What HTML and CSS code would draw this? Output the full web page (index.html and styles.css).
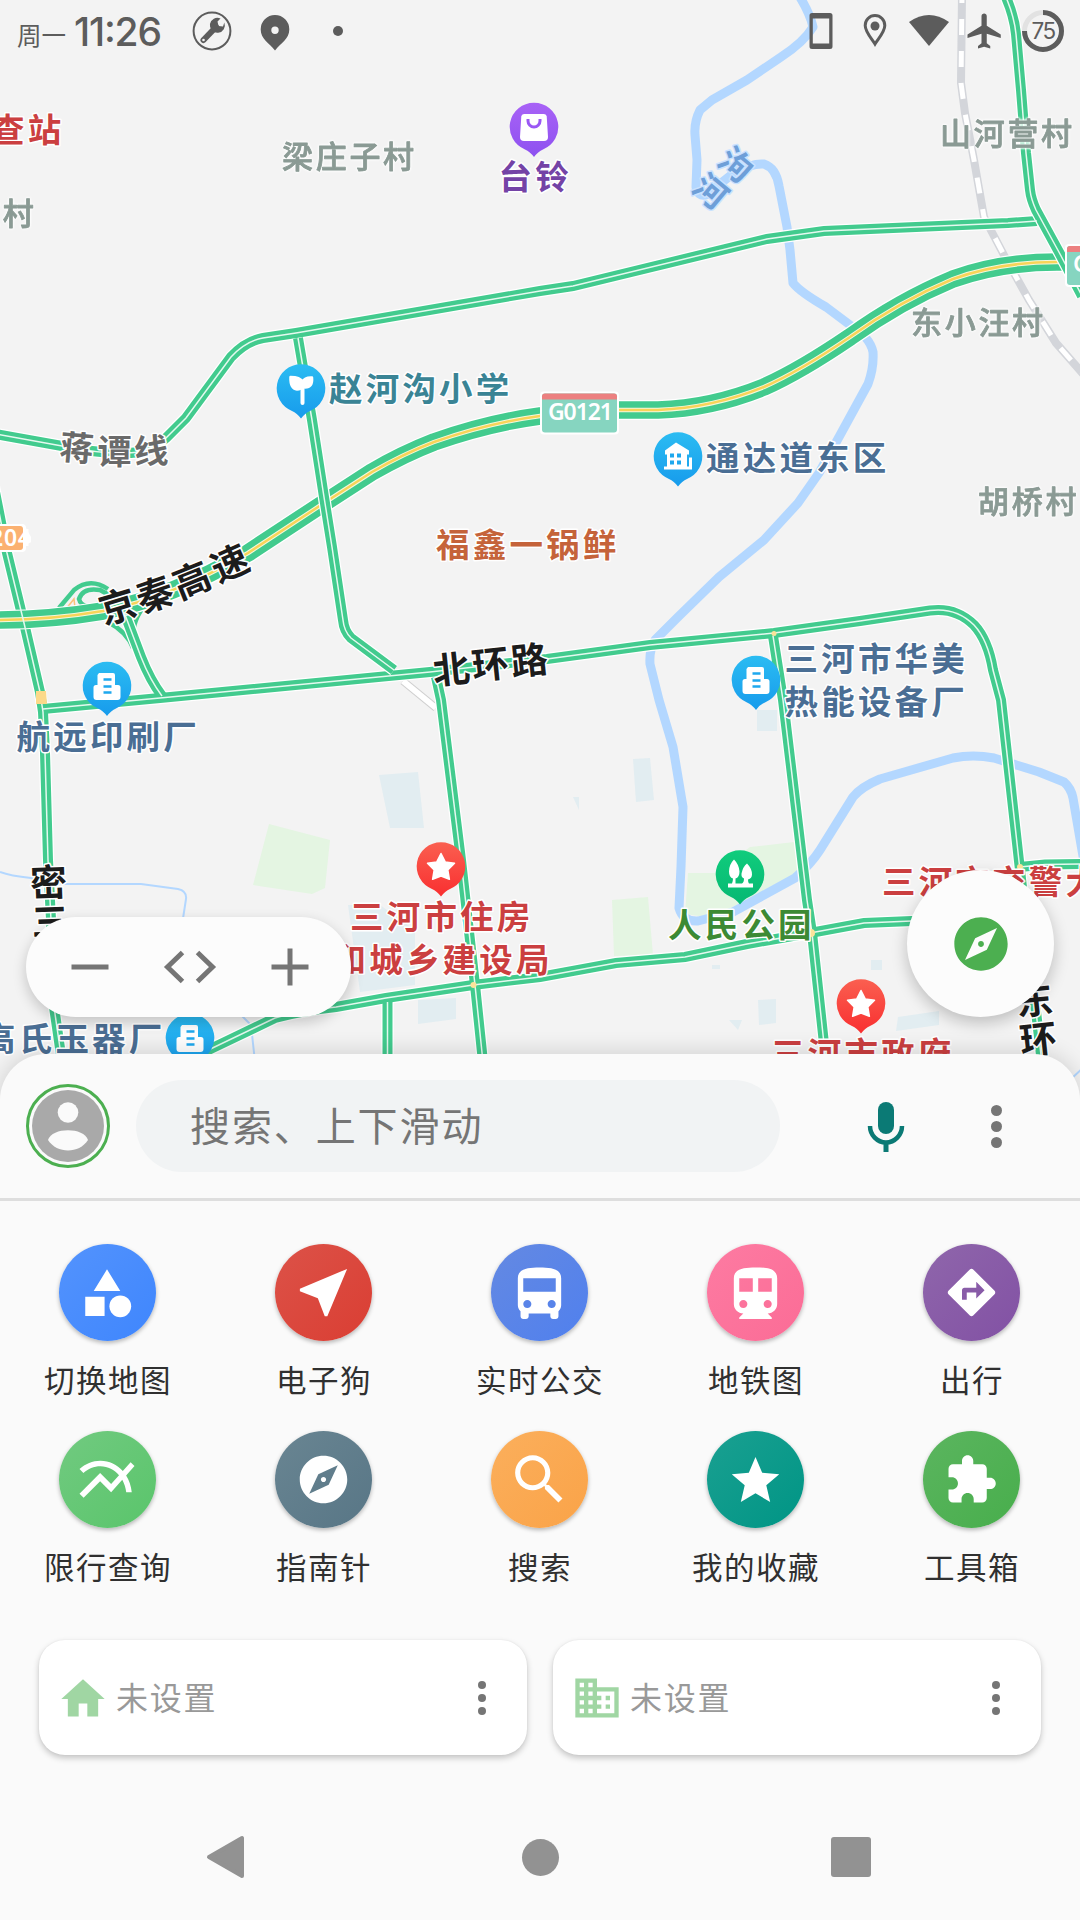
FILE: index.html
```html
<!DOCTYPE html>
<html lang="zh-CN">
<head>
<meta charset="utf-8">
<title>地图</title>
<link rel="stylesheet" href="styles.css">
</head>
<body>
<main class="screen">
  <section class="map-area">
    <svg class="map" viewBox="0 0 1080 1110" width="1080" height="1110">
      <defs>
        <linearGradient id="pin-blue" x1="0" y1="0" x2="0" y2="1"><stop offset="0" stop-color="#2bbcf2"/><stop offset="1" stop-color="#179bec"/></linearGradient>
        <linearGradient id="pin-red" x1="0" y1="0" x2="0" y2="1"><stop offset="0" stop-color="#fa5f50"/><stop offset="1" stop-color="#f92f30"/></linearGradient>
        <linearGradient id="pin-green" x1="0" y1="0" x2="0" y2="1"><stop offset="0" stop-color="#10cc7c"/><stop offset="1" stop-color="#06b873"/></linearGradient>
        <linearGradient id="pin-purple" x1="0" y1="0" x2="0" y2="1"><stop offset="0" stop-color="#a862f6"/><stop offset="1" stop-color="#8d51f0"/></linearGradient>
        <path id="pin" d="M0-24.3a24.2 24.2 0 0 1 9 46.7Q4 24.500 0 30Q-4 24.500-9 22.400A24.200 24.200 0 0 1 0-24.300z"/>
        <g id="factory"><path d="M-8-13h14q2 0 2 2v10h3q2.500 0 2.500 2.500V11q0 3-3 3h-21q-3 0-3-3V1.500Q-13.500-1-11-1h1.500V-11z" fill="#fff"/><path d="M-3.500-6.500h8M-3.500.5h8M-3.500 6.500h8" stroke="#1ea8ee" stroke-width="2.600"/></g>
        <path id="star" d="M0-13l4.200 8.400 9.300 1.400-6.700 6.600 1.600 9.400L0 9.500l-8.400 3.300 1.600-9.400-6.700-6.600 9.300-1.400z" fill="#fff" stroke="#fff" stroke-width="1.500" stroke-linejoin="round"/>
        <path id="r-north" d="M-2 434.500L62 446Q110 456 140 452Q158 446 166 438L186 418L231 357Q246 341 263 338L296 333L540 291L573 286L767 239L824 231L1008 223L1037 221"/>
        <path id="r-east" d="M1005-5Q1014 15 1016 34L1021 90L1026 153L1030 190Q1031 199 1036 210L1060 254L1082 296"/>
        <path id="r-mid" d="M298 338L312 420L324 497L332 547L343 620Q344 631 351 638L394 670"/>
        <path id="r-west" d="M-11 462L-2 507L7 553L24 623L40 692L43 712L45 753L48 860L51 920L53 1000L62 1062"/>
        <path id="r-ring" d="M43 709L160 698L430 672L547 659L650 645L774 633L860 621L930 610.500Q956 607 974 625Q988 640 993 670L1001 700L1020 870L1042 1064"/>
        <path id="r-f" d="M436 677L441 700L461 860L475 985L483 1062"/>
        <path id="r-g" d="M200 1054L275 1018Q305 1010 336 1007L386 998L473 985L540 977L616 963L685 957L747 944L810 933L864 923L912 921L980 919"/>
        <path id="r-h" d="M773 636L783 700L807 900L812 933L826 1062"/>
        <path id="r-i" d="M387.500 1002V1062"/>
        <path id="r-j" d="M1020 867L1045 864.500L1082 864"/>
        <path id="r-ramp" d="M124 612L141 657Q150 680 162 696"/>
        <path id="hwy" d="M-5 620Q50 620 103 611Q170 598 248 553L324 503L372 472Q403 454 434 442Q488 423 540 416L619 410H658Q712 408 764 387Q800 371 850 337Q900 301 953 279Q1000 262 1057 262H1085"/>
      </defs>
      <rect width="1080" height="1110" fill="#f3f3f3"/>
      <g class="green-land">
        <path d="M269 824l61 16-5 48-13 6-59-9zM612 900l36-3 5 58-39 1zM688 873h27l35-26 44-5 4 30-86 46-27-4z"/>
      </g>
      <g class="blue-land">
        <path d="M379 775l39-3 6 56h-34zM348 905h32l35 25v55l-55 7zM418 1000l38-2v21l-38 5zM633 759l17-1 4 42-18 2zM758 1000l18-1v24l-17 2zM729 1020h13l-4 10zM898 1017l41-6v14l-43 6zM871 960h11v10h-11zM712 965h8v4h-8zM757 710h20v21h-20zM573 797h6v13z"/>
      </g>
      <g class="river">
        <path d="M798-6Q810 13 813 27Q804 42 781 57L747 80L712 100L700 110Q694 122 695 135L697 160L696 187Q698 197 706 195L735 172Q752 163 764 164Q776 168 779 186L787 227L790 250L793 283Q800 292 826 307L850 325Q870 337 873 352Q874 368 868 384L839 437L819 473L798 503L764 540L719 577L678 617L655 640Q649 650 650 664L659 700L673 747L683 807L681 867L679 908Q683 922 698 921L733 912L795 878Q811 864 820 850L853 797Q861 787 880 779L953 758Q973 754 994 758L1039 772L1064 782Q1071 788 1073 798L1084 862"/>
      </g>
      <path class="stream" d="M0 872Q10 876 31 878L65 884H141L178 889Q187 891 186 899L182 925M241 1015L251 1025L255 1062M1070 1080L1084 1067"/>
      <path class="rail" d="M962-5L961 83L965 113L974 160L984 217L1005 257L1029 300L1056 343L1084 375"/>
      <path class="rail-dash" d="M962-5L961 83L965 113L974 160L984 217L1005 257L1029 300L1056 343L1084 375"/>
      <path d="M403 681L436 708" stroke="#cfcfcf" stroke-width="8"/><path d="M403 681L436 708" stroke="#fff" stroke-width="6"/>
      <g class="ramp">
        <path d="M59 608L74 590Q90 577 108 589M112 604Q82 612 79 599Q83 587 100 590L118 600M108 622Q127 632 133 648M150 600Q134 615 133 634"/>
      </g>
      <path d="M66 609l8-10 1 9" fill="none" stroke="#fbc27a" stroke-width="1.500"/>
      <g class="casing"><use href="#r-north"/><use href="#r-ramp"/><use href="#r-i"/><use href="#r-j"/><use href="#r-f"/><use href="#r-h"/><use href="#r-g"/><use href="#r-west"/><use href="#r-ring"/></g>
      <g class="road"><use href="#r-north"/><use href="#r-ramp"/><use href="#r-i"/><use href="#r-j"/><use href="#r-f"/><use href="#r-h"/><use href="#r-g"/><use href="#r-west"/><use href="#r-ring"/></g>
      <use href="#hwy" class="hwy-case"/><use href="#hwy" class="hwy"/><use href="#hwy" class="hwy-white"/><use href="#hwy" class="hwy-line"/>
      <g class="casing"><use href="#r-mid"/><use href="#r-east"/></g>
      <g class="road"><use href="#r-mid"/><use href="#r-east"/></g>
      <g class="lane"><use href="#r-north"/><use href="#r-ramp"/><use href="#r-i"/><use href="#r-j"/><use href="#r-f"/><use href="#r-h"/><use href="#r-g"/><use href="#r-west"/><use href="#r-ring"/><use href="#r-mid"/><use href="#r-east"/></g>
      <path d="M36 691h10l1 13H36z" fill="#fbd98a"/>
      <circle cx="473.500" cy="985" r="3" fill="#fbe39a"/><circle cx="811" cy="933" r="4" fill="#fbe39a"/><circle cx="1020" cy="867" r="3" fill="#fbe39a"/><circle cx="774" cy="633.500" r="2.500" fill="#fbe39a"/>

      <g class="shield">
        <rect x="540" y="391.500" width="79" height="43" rx="4" fill="#fff"/>
        <rect x="542" y="393.500" width="75" height="39" rx="3" fill="#86d5c0"/>
        <path d="M542 399.500v-3q0-3 3-3h69q3 0 3 3v3z" fill="#ec8080"/>
        <text x="548" y="419.500" textLength="65">G0121</text>
        <rect x="1065" y="244" width="30" height="43" rx="4" fill="#fff"/>
        <rect x="1067" y="246" width="28" height="39" rx="3" fill="#86d5c0"/>
        <path d="M1067 252v-3q0-3 3-3h25v6z" fill="#ec8080"/>
        <text x="1073" y="272">G</text>
        <path d="M-20 524h42q4 0 4 4l5 9v5l-5 3v3q0 4-4 4h-42z" fill="#fff"/>
        <rect x="-20" y="526" width="43" height="24" rx="3" fill="#fbb171"/>
        <text x="-10" y="545.500" textLength="41">204</text>
      </g>

      <g class="village">
        <text x="-31" y="225">庄村</text><text x="282" y="168">梁庄子村</text><text x="940" y="145">山河营村</text><text x="911" y="334">东小汪村</text><text x="978" y="513">胡桥村</text>
      </g>
      <g class="place">
        <g class="c-red"><text x="-9" y="142">查站</text><text x="350" y="929">三河市住房</text><text x="332.500" y="972">和城乡建设局</text><text x="882" y="894">三河市交警大队</text><text x="771" y="1066">三河市政府</text></g>
        <text class="c-purple" x="498.500" y="189">台铃</text>
        <text class="c-teal" x="329" y="401">赵河沟小学</text>
        <text class="c-orange" x="436" y="557">福鑫一锅鲜</text>
        <text class="c-green" x="668" y="937">人民公园</text>
        <g class="c-blue"><text x="706" y="470">通达道东区</text><text x="784.500" y="671">三河市华美</text><text x="784.500" y="714">热能设备厂</text><text x="16.500" y="749">航远印刷厂</text><text x="-18" y="1051">高氏玉器厂</text></g>
      </g>
      <g class="road-name">
        <g class="c-gray"><text transform="translate(77 446) rotate(5)">蒋</text><text transform="translate(114.500 449)">谭</text><text transform="translate(151 449) rotate(-3)">线</text></g>
        <g class="c-river"><text transform="translate(737 163) rotate(40)">泃</text><text transform="translate(712 190) rotate(40)">河</text></g>
      </g>
      <g class="road-name big">
        <text transform="translate(117 604) rotate(-17)">京</text><text transform="translate(154 592) rotate(-19)">秦</text><text transform="translate(191 578) rotate(-22)">高</text><text transform="translate(229 561) rotate(-24)">速</text>
        <text transform="translate(451 667) rotate(-6)">北</text><text transform="translate(490 662) rotate(-6)">环</text><text transform="translate(529 658) rotate(-6)">路</text>
        <text transform="translate(48.500 880) rotate(-2)">密</text><text transform="translate(50 919) rotate(-2)">三</text><text transform="translate(1034 998) rotate(-6)">东</text><text transform="translate(1038 1037) rotate(-6)">环</text>
      </g>

      <g transform="translate(534 127)"><use href="#pin" fill="url(#pin-purple)"/><path d="M-10-13h20q2.500 0 2.700 2.500L14 10q0 4-4 4h-20q-4 0-4-4l1.300-20.500Q-12.500-13-10-13z" fill="#fff"/><path d="M-6-8v2a6 6 0 0 0 12 0v-2" fill="none" stroke="#9a58f4" stroke-width="3"/></g>
      <g transform="translate(301 388.500)"><use href="#pin" fill="url(#pin-blue)"/><path d="M1.500 14.500V-2" stroke="#fff" stroke-width="4" stroke-linecap="round"/><path d="M-10.500-11.500Q-1-11.500 1.500-7Q4-11.500 11-11Q12-1 4-1Q2-1 1.500-2Q0 1-4 1Q-11 0-10.500-11.500z" fill="#fff" stroke="#fff" stroke-width="2.500" stroke-linejoin="round"/></g>
      <g transform="translate(678 456.500)"><use href="#pin" fill="url(#pin-blue)"/><path d="M-2-14L11-6v4H9V10h2V1h3v12h-28v-3h3V-2h-2v-4z" fill="#fff"/><path d="M-8-3h4v4h-4zM-1-3h4v4h-4zM-8 4h4v4h-4zM-1 4h4v4h-4z" fill="#1ea8ee"/></g>
      <g transform="translate(107 686)"><use href="#pin" fill="url(#pin-blue)"/><use href="#factory"/></g>
      <g transform="translate(756 680)"><use href="#pin" fill="url(#pin-blue)"/><use href="#factory"/></g>
      <g transform="translate(190 1038)"><use href="#pin" fill="url(#pin-blue)"/><use href="#factory"/></g>
      <g transform="translate(441 866.500)"><use href="#pin" fill="url(#pin-red)"/><use href="#star"/></g>
      <g transform="translate(861 1003.500)"><use href="#pin" fill="url(#pin-red)"/><use href="#star"/></g>
      <g transform="translate(740 874.500)"><use href="#pin" fill="url(#pin-green)"/><path d="M-6-15q5 5 5.500 12q0 6-4 7v5h6.500q2-1 2-5q-3-1-2.500-5Q3-8 7-11q5 5 5 11q0 4-4 5q0 3 1 4h4v4h-25v-4h4q1-3 1-5q-4-1-4-7q0-7 5-12z" fill="#fff"/></g>
    </svg>

    <header class="status-bar">
      <div class="status-left">
        <span class="weekday">周一</span>
        <svg class="clock" viewBox="0 0 90 40" width="90" height="40"><text x="0" y="34" textLength="88">11:26</text></svg>
        <svg class="ic-wrench" viewBox="0 0 40 40" width="40" height="40"><circle cx="20" cy="20" r="18.400" fill="none" stroke="currentColor" stroke-width="2"/><path d="M11.500 29L24 16" stroke="currentColor" stroke-width="6" stroke-linecap="round"/><path d="M32.300 11.500L31 15.500L26.500 15L25.500 10.500L28.500 7.500A7.500 7.500 0 1 0 32.300 11.500z" fill="currentColor"/><circle cx="11.500" cy="29" r="1.300" fill="#f3f3f3"/></svg>
        <svg class="ic-pin" viewBox="0 0 30 36" width="30" height="36"><path fill-rule="evenodd" d="M15 0a14.300 14.300 0 0 1 14.300 14.600C29.300 24 21 28 15 35.500C9 28 .7 24 .7 14.600A14.300 14.300 0 0 1 15 0zm0 11.500a3.700 3.700 0 1 0 0 7.400a3.700 3.700 0 1 0 0-7.400z" fill="currentColor"/></svg>
        <span class="notice-dot"></span>
      </div>
      <div class="status-right">
        <svg viewBox="0 0 24 38" width="24" height="38"><path fill-rule="evenodd" d="M3 1h18q2.500 0 2.500 2.500v31q0 2.500-2.500 2.500H3Q.5 37 .5 34.500v-31Q.5 1 3 1zm.8 5.500v25h16.400v-25z" fill="currentColor"/></svg>
        <svg viewBox="0 0 24 36" width="24" height="36"><path d="M12 2.500A9.800 9.800 0 0 0 2.200 12.500C2.200 19 9 26 12 31C15 26 21.800 19 21.800 12.500A9.800 9.800 0 0 0 12 2.500z" fill="none" stroke="currentColor" stroke-width="3"/><circle cx="12" cy="13" r="4.500" fill="currentColor"/></svg>
        <svg viewBox="0 0 42 34" width="42" height="34"><path d="M1 8Q21-6 41 8L21 32z" fill="currentColor"/></svg>
        <svg class="ic-plane" viewBox="0 0 24 24" width="42" height="42"><path d="M21 16v-2l-8-5V3.500c0-.83-.67-1.500-1.500-1.500S10 2.670 10 3.500V9l-8 5v2l8-2.500V19l-2 1.500V22l3.500-1 3.500 1v-1.500L13 19v-5.500l8 2.500z" fill="currentColor"/></svg>
        <div class="battery">
          <svg viewBox="0 0 44 44" width="44" height="44"><circle cx="22" cy="22" r="18.500" fill="none" stroke="#e2e2e2" stroke-width="5"/><path d="M22 3.500A18.500 18.500 0 1 1 3.500 22" fill="none" stroke="currentColor" stroke-width="5"/></svg>
          <span>75</span>
        </div>
      </div>
    </header>

    <div class="map-controls">
      <div class="zoom-pill">
        <svg viewBox="0 0 40 40" width="40" height="40"><path d="M1.500 20h37" stroke="currentColor" stroke-width="5"/></svg>
        <svg viewBox="0 0 54 34" width="54" height="34"><path d="M19.500 2.500L4.500 17l15 14.500M34.500 2.500L49.500 17l-15 14.500" fill="none" stroke="currentColor" stroke-width="5"/></svg>
        <svg viewBox="0 0 40 40" width="40" height="40"><path d="M1.500 20h37M20 1.500v37" stroke="currentColor" stroke-width="5"/></svg>
      </div>
      <div class="compass-btn">
        <svg viewBox="0 0 24 24" width="64" height="64"><path fill="#4caf50" d="M12 10.900c-.61 0-1.100.49-1.100 1.100s.49 1.100 1.100 1.100 1.100-.49 1.100-1.100-.49-1.100-1.100-1.100zM12 2C6.480 2 2 6.480 2 12s4.480 10 10 10 10-4.480 10-10S17.520 2 12 2zm2.190 12.190L6 18l3.810-8.190L18 6l-3.810 8.190z"/></svg>
      </div>
    </div>
  </section>

  <section class="sheet">
    <div class="search-row">
      <div class="avatar"><svg viewBox="0 0 72 72" width="72" height="72"><circle cx="36" cy="36" r="36" fill="#a9a9a9"/><circle cx="36" cy="22.500" r="10.300" fill="#fafafa"/><path d="M16 50C20 37 52 37 56 50C47 64 25 64 16 50z" fill="#fafafa"/></svg></div>
      <div class="search-box">搜索、上下滑动</div>
      <svg class="mic" viewBox="0 0 38 52" width="38" height="52"><rect x="11" y="1" width="16" height="32" rx="8" fill="currentColor"/><path d="M3 25a16 16.500 0 0 0 32 0" fill="none" stroke="currentColor" stroke-width="4.500"/><path d="M19 41v10" stroke="currentColor" stroke-width="5"/></svg>
      <div class="more large"><i></i><i></i><i></i></div>
    </div>

    <div class="shortcuts">
      <div class="shortcut"><span class="disc blue"><svg viewBox="0 0 24 24" width="58" height="58"><path d="M12 2.200l-5.500 9h11zM3 13.500h8v8H3z"/><circle cx="17.500" cy="17.500" r="4.500"/></svg></span><span class="name">切换地图</span></div>
      <div class="shortcut"><span class="disc red"><svg viewBox="0 0 24 24" width="63" height="63"><path d="M21 3L3 10.530v.98l6.840 2.650L12.480 21h.98L21 3z"/></svg></span><span class="name">电子狗</span></div>
      <div class="shortcut"><span class="disc indigo"><svg class="lower" viewBox="0 0 24 24" width="65" height="65"><path d="M4 16c0 .88.39 1.670 1 2.220V20c0 .55.45 1 1 1h1c.55 0 1-.45 1-1v-1h8v1c0 .55.45 1 1 1h1c.55 0 1-.45 1-1v-1.780c.61-.55 1-1.340 1-2.220V6c0-3.500-3.580-4-8-4s-8 .5-8 4v10zm3.500 1c-.83 0-1.500-.67-1.500-1.500S6.670 14 7.500 14s1.500.67 1.500 1.500S8.330 17 7.500 17zm9 0c-.83 0-1.500-.67-1.500-1.500s.67-1.500 1.500-1.500 1.500.67 1.500 1.500-.67 1.500-1.500 1.500zm1.500-6H6V6h12v5z"/></svg></span><span class="name">实时公交</span></div>
      <div class="shortcut"><span class="disc pink"><svg class="lower" viewBox="0 0 24 24" width="65" height="65"><path d="M12 2c-4.420 0-8 .5-8 4v9.500C4 17.430 5.570 19 7.500 19L6 20.500v.5h12v-.5L16.500 19c1.930 0 3.500-1.570 3.500-3.500V6c0-3.500-3.580-4-8-4zM7.500 17c-.83 0-1.500-.67-1.500-1.500S6.670 14 7.500 14s1.500.67 1.500 1.500S8.330 17 7.500 17zm3.500-6H6V6h5v5zm2 0V6h5v5h-5zm3.500 6c-.83 0-1.500-.67-1.500-1.500s.67-1.500 1.500-1.500 1.500.67 1.500 1.500-.67 1.500-1.500 1.500z"/></svg></span><span class="name">地铁图</span></div>
      <div class="shortcut"><span class="disc purple"><svg viewBox="0 0 24 24" width="57" height="57"><path d="M21.710 11.290l-9-9c-.39-.39-1.020-.39-1.410 0l-9 9c-.39.39-.39 1.020 0 1.410l9 9c.39.39 1.020.39 1.410 0l9-9c.39-.38.39-1.010 0-1.410zM14 14.500V12h-4v3H8v-4c0-.55.45-1 1-1h5V7.500l3.500 3.500-3.500 3.500z"/></svg></span><span class="name">出行</span></div>
      <div class="shortcut"><span class="disc lime"><svg viewBox="0 0 24 24" width="66" height="66"><path d="M22 6.920l-1.410-1.410-2.850 3.210C15.680 6.400 12.830 5 9.610 5 6.720 5 4.070 6.160 2 8l1.420 1.420C5.120 7.930 7.270 7 9.610 7c2.740 0 5.090 1.260 6.770 3.240l-2.880 3.240-4-4L2 16.990l1.500 1.500 6-6.010 4 4 4.050-4.550c.75 1.350 1.250 2.900 1.440 4.550H21c-.22-2.300-.95-4.390-2.040-6.140L22 6.920z"/></svg></span><span class="name">限行查询</span></div>
      <div class="shortcut"><span class="disc slate"><svg viewBox="0 0 24 24" width="57" height="57"><path d="M12 10.900c-.61 0-1.100.49-1.100 1.100s.49 1.100 1.100 1.100 1.100-.49 1.100-1.100-.49-1.100-1.100-1.100zM12 2C6.480 2 2 6.480 2 12s4.480 10 10 10 10-4.480 10-10S17.520 2 12 2zm2.190 12.190L6 18l3.810-8.190L18 6l-3.810 8.190z"/></svg></span><span class="name">指南针</span></div>
      <div class="shortcut"><span class="disc amber"><svg viewBox="0 0 24 24" width="65" height="65"><path d="M15.500 14h-.79l-.28-.27C15.410 12.590 16 11.110 16 9.500 16 5.910 13.090 3 9.500 3S3 5.910 3 9.500 5.910 16 9.500 16c1.610 0 3.090-.59 4.230-1.570l.27.28v.79l5 4.990L20.490 19l-4.990-5zm-6 .1C6.960 14.100 4.900 12.040 4.900 9.500S6.960 4.900 9.500 4.900s4.600 2.060 4.600 4.600-2.060 4.600-4.600 4.600z"/></svg></span><span class="name">搜索</span></div>
      <div class="shortcut"><span class="disc teal"><svg viewBox="0 0 24 24" width="57" height="57"><path d="M12 17.770L18.180 21.500l-1.640-7.030L22 9.740l-7.190-.61L12 2.500 9.190 9.130 2 9.740l5.460 4.730L5.820 21.500z"/></svg></span><span class="name">我的收藏</span></div>
      <div class="shortcut"><span class="disc green"><svg viewBox="0 0 24 24" width="54" height="54"><path d="M20.500 11H19V7c0-1.100-.9-2-2-2h-4V3.500C13 2.120 11.880 1 10.500 1S8 2.120 8 3.500V5H4c-1.100 0-1.990.9-1.990 2v3.800H3.500c1.490 0 2.700 1.210 2.700 2.700s-1.210 2.700-2.700 2.700H2V20c0 1.100.9 2 2 2h3.800v-1.500c0-1.490 1.210-2.700 2.700-2.700 1.490 0 2.700 1.210 2.700 2.700V22H17c1.100 0 2-.9 2-2v-4h1.500c1.380 0 2.500-1.120 2.500-2.500S21.880 11 20.500 11z"/></svg></span><span class="name">工具箱</span></div>
    </div>

    <div class="presets">
      <div class="preset"><svg viewBox="0 0 24 24" width="52" height="52"><path d="M10 20.500v-6h4v6h5v-8h3L12 3.300 2 12.500h3v8z"/></svg><span class="preset-text">未设置</span><div class="more"><i></i><i></i><i></i></div></div>
      <div class="preset"><svg viewBox="0 0 24 24" width="52" height="52"><path d="M12 7V3H2v18h20V7H12zM6 19H4v-2h2v2zm0-4H4v-2h2v2zm0-4H4V9h2v2zm0-4H4V5h2v2zm4 12H8v-2h2v2zm0-4H8v-2h2v2zm0-4H8V9h2v2zm0-4H8V5h2v2zm10 12h-8v-2h2v-2h-2v-2h2v-2h-2V9h8v10zm-2-8h-2v2h2v-2zm0 4h-2v2h2v-2z"/></svg><span class="preset-text">未设置</span><div class="more"><i></i><i></i><i></i></div></div>
    </div>

    <nav class="nav-bar">
      <svg viewBox="0 0 38 44" width="38" height="44"><path d="M36 3v38L3 22z" fill="currentColor" stroke="currentColor" stroke-width="4" stroke-linejoin="round"/></svg>
      <span class="nav-home"></span>
      <span class="nav-recent"></span>
    </nav>
  </section>
</main>
</body>
</html>
```

FILE: styles.css
```css
* { box-sizing: border-box; }
body {
  margin: 0;
  background: #fafafa;
  font-family: "Noto Sans CJK SC", "Noto Sans", sans-serif;
}
svg { display: block; flex: none; }
.screen {
  width: 1080px;
  height: 1920px;
  overflow: hidden;
  display: flex;
  flex-direction: column;
}

/* Map */
.map-area { position: relative; height: 1054px; flex: none; }
.map { overflow: hidden; }
.green-land { fill: #e4f5e2; }
.blue-land { fill: #e2edf1; }
.river path { fill: none; stroke: #b3d7ff; stroke-width: 9px; stroke-linejoin: round; }
.stream { fill: none; stroke: #b3d7ff; stroke-width: 2; }
.rail { fill: none; stroke: #d3d5da; stroke-width: 8px; }
.rail-dash { fill: none; stroke: #fff; stroke-width: 5px; stroke-dasharray: 16 16; stroke-dashoffset: 8; }
.ramp path { fill: none; stroke: #42cb8e; stroke-width: 4.500px; }
.casing { fill: none; stroke: #fff; stroke-width: 12.500px; }
.road { fill: none; stroke: #42cb8e; stroke-width: 10px; }
.lane { fill: none; stroke: #e4f9ef; stroke-width: 1.500px; }
.hwy-case { fill: none; stroke: #fff; stroke-width: 20px; }
.hwy { fill: none; stroke: #42cb8e; stroke-width: 17.500px; }
.hwy-white { fill: none; stroke: #f4f8dc; stroke-width: 4.500px; }
.hwy-line { fill: none; stroke: #f8d458; stroke-width: 2.500px; }

.map text { font-weight: 600; paint-order: stroke; stroke: #fff; stroke-width: 3px; stroke-linejoin: round; }
.map .shield text { font-family: "Noto Sans", sans-serif; font-size: 23px; font-weight: 600; fill: #fff; stroke: none; }
.map .village text {
  font-size: 31px;
  letter-spacing: 2.700px;
  font-weight: 500;
  fill: #8a9a94;
  stroke: #8a9a94;
  stroke-width: .8px;
  filter: drop-shadow(0 0 1px #fff) drop-shadow(0 0 1px #fff);
}
.place text { font-size: 33.500px; letter-spacing: 3.200px; }
.c-red { fill: #cb3f40; }
.c-purple { fill: #7443a6; }
.c-teal { fill: #3a8495; }
.c-orange { fill: #c5633a; }
.c-green { fill: #3c8a34; }
.c-blue { fill: #4a6e94; }
.c-gray { fill: #6a6a6a; }
.c-river { fill: #6e9fd8; }
.road-name text { font-size: 34px; text-anchor: middle; dominant-baseline: central; }
.map .c-river text { font-size: 33px; stroke: #c9e2ff; }
.road-name.big text { font-size: 37px; fill: #1c1c1c; }

/* Status bar */
.status-bar {
  position: absolute;
  inset: 0 0 auto 0;
  height: 62px;
  padding: 0 15px 0 17px;
  display: flex;
  justify-content: space-between;
  align-items: center;
  color: #5c5c5c;
}
.status-left, .status-right { display: flex; align-items: center; }
.weekday { font-size: 24.500px; line-height: 24px; padding-top: 8px; width: 49px; }
.clock { margin-left: 8px; margin-top: 2px; overflow: visible; }
.clock text { font-family: Inter, sans-serif; font-size: 39px; font-weight: 500; fill: currentColor; }
.ic-wrench { margin-left: 28px; }
.ic-pin { margin-left: 28px; margin-top: 4px; }
.notice-dot { width: 10px; height: 10px; border-radius: 50%; background: currentColor; margin-left: 43px; }
.status-right svg:nth-child(2) { margin-left: 30px; }
.status-right svg:nth-child(3) { margin-left: 21px; }
.ic-plane { margin-left: 14px; }
.battery { display: grid; place-items: center; margin-left: 15px; }
.battery > * { grid-area: 1 / 1; }
.battery span { font-family: Inter, sans-serif; font-size: 22.500px; letter-spacing: -1.500px; line-height: 24px; }

/* Floating controls */
.map-controls {
  position: absolute;
  inset: auto 26px 37px 26px;
  display: flex;
  justify-content: space-between;
  align-items: flex-end;
}
.zoom-pill {
  width: 325px;
  height: 100px;
  border-radius: 50px;
  padding: 0 41px 0 44px;
  background: #fcfcfc;
  box-shadow: 0 5px 14px rgba(0, 0, 0, .2);
  display: flex;
  align-items: center;
  justify-content: space-between;
  color: #757575;
}
.compass-btn {
  width: 147px;
  height: 147px;
  border-radius: 50%;
  background: #fcfcfc;
  box-shadow: 0 6px 16px rgba(0, 0, 0, .22);
  display: grid;
  place-items: center;
}

/* Bottom sheet */
.sheet {
  position: relative;
  flex: 1;
  background: #fafafa;
  border-radius: 46px 46px 0 0;
  box-shadow: 0 -2px 22px rgba(0, 0, 0, .14);
  display: flex;
  flex-direction: column;
}
.search-row {
  height: 147px;
  flex: none;
  padding: 0 78px 0 26px;
  border-bottom: 3px solid #dedede;
  display: flex;
  align-items: center;
}
.avatar {
  width: 84px;
  height: 84px;
  border: 3px solid #4caf50;
  border-radius: 50%;
  display: grid;
  place-items: center;
}
.search-box {
  width: 644px;
  height: 92px;
  margin-left: 26px;
  padding-left: 54px;
  border-radius: 46px;
  background: #f1f3f4;
  color: #757575;
  font-size: 40px;
  letter-spacing: 1.900px;
  line-height: 89px;
}
.mic { margin: 2px 0 0 87px; color: #0b7a75; }
.more { display: flex; flex-direction: column; gap: 5px; margin-left: auto; }
.more i { width: 8px; height: 8px; border-radius: 50%; background: #757575; }
.more.large { gap: 5px; }
.more.large i { width: 11px; height: 11px; }

.shortcuts {
  display: grid;
  grid-template-columns: repeat(5, 216px);
  grid-auto-rows: 187px;
  padding-top: 43px;
  margin-left: -1px;
}
.shortcut { display: flex; flex-direction: column; align-items: center; gap: 15px; }
.disc {
  width: 97px;
  height: 97px;
  border-radius: 50%;
  box-shadow: 0 2px 4px rgba(0, 0, 0, .28);
  display: grid;
  place-items: center;
}
.disc svg { fill: #fff; }
.disc .lower { margin-top: 3px; }
.name { font-size: 30.500px; letter-spacing: 1.500px; line-height: 46px; margin-right: -2px; color: #303030; }
.blue { background: linear-gradient(135deg, #5393fd, #3f86fd); }
.red { background: linear-gradient(135deg, #dc5248, #da3e33); }
.indigo { background: linear-gradient(135deg, #6489e2, #5080ee); }
.pink { background: linear-gradient(135deg, #fd7ba2, #fb6c96); }
.purple { background: linear-gradient(135deg, #8f66ab, #8251a4); }
.lime { background: linear-gradient(135deg, #71ca80, #5ac56b); }
.slate { background: linear-gradient(135deg, #698592, #587686); }
.amber { background: linear-gradient(135deg, #fbaf5c, #faa348); }
.teal { background: linear-gradient(135deg, #1aa091, #009585); }
.green { background: linear-gradient(135deg, #5bb55f, #48ae4c); }

.presets {
  display: grid;
  grid-template-columns: 1fr 1fr;
  gap: 26px;
  padding: 22px 39px 0;
}
.preset {
  height: 115px;
  border-radius: 26px;
  background: #fff;
  box-shadow: 0 3px 6px rgba(0, 0, 0, .22), 0 0 2px rgba(0, 0, 0, .06);
  padding: 0 41px 0 18px;
  display: flex;
  align-items: center;
}
.preset svg { fill: #a0d6a3; }
.preset-text { margin: -4px 0 0 7px; font-size: 32px; letter-spacing: 1.800px; line-height: 48px; color: #999; }

.nav-bar {
  display: grid;
  grid-template-columns: 315px 315px 307px;
  place-items: center;
  height: 60px;
  margin-top: 72px;
  padding-left: 67.500px;
  color: #929292;
}
.nav-home { width: 37px; height: 37px; border-radius: 50%; background: currentColor; }
.nav-recent { width: 40px; height: 40px; border-radius: 3px; background: currentColor; }
```
